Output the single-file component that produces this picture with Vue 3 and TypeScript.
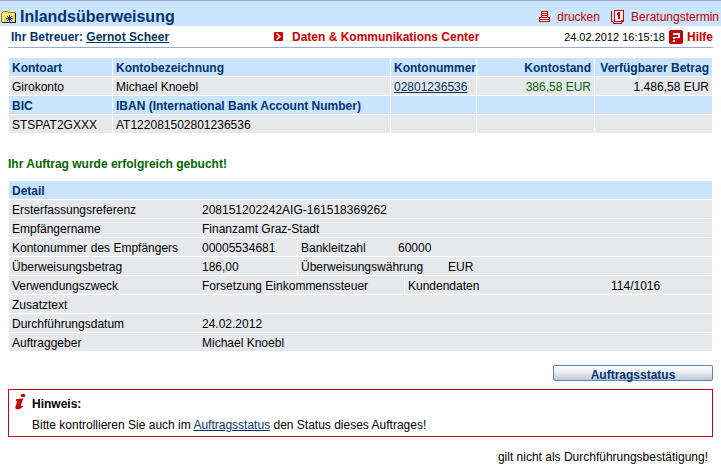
<script setup lang="ts">
interface Segment {
  label: string
  value: string
  size: 'narrow' | 'medium' | 'wide'
}

interface DetailRow {
  label: string
  value: string
  first?: 'short' | 'long'
  extra?: Segment
}

const details: DetailRow[] = [
  { label: 'Ersterfassungsreferenz', value: '208151202242AIG-161518369262' },
  { label: 'Empfängername', value: 'Finanzamt Graz-Stadt' },
  {
    label: 'Kontonummer des Empfängers',
    value: '00005534681',
    first: 'short',
    extra: { label: 'Bankleitzahl', value: '60000', size: 'narrow' },
  },
  {
    label: 'Überweisungsbetrag',
    value: '186,00',
    first: 'short',
    extra: { label: 'Überweisungswährung', value: 'EUR', size: 'medium' },
  },
  {
    label: 'Verwendungszweck',
    value: 'Forsetzung Einkommenssteuer',
    first: 'long',
    extra: { label: 'Kundendaten', value: '114/1016', size: 'wide' },
  },
  { label: 'Zusatztext', value: '' },
  { label: 'Durchführungsdatum', value: '24.02.2012' },
  { label: 'Auftraggeber', value: 'Michael Knoebl' },
]
</script>

<template>
  <div class="page">
    <header class="titlebar">
      <svg class="folder" viewBox="0 0 16 14" width="16" height="14" aria-hidden="true" shape-rendering="crispEdges">
        <path d="M1 3h1V1h5v2h7v10H1z" fill="#ffd858" />
        <path d="M2 4h12v1H3v8H2z" fill="#fff6b0" />
        <path d="M0 3h1v9H0zM1 2h1v1H1zM2 1h5v1H2zM7 2h7v1H7z" fill="#a08020" />
        <path d="M14 3h1v10h-1zM1 12h14v1H1z" fill="#201800" />
        <path d="M8 5h1v7H8zM5 8h7v1H5z" fill="#1030c0" />
        <path d="M6 6h1v1H6zM7 7h1v1H7zM9 7h1v1H9zM10 6h1v1h-1zM7 9h1v1H7zM6 10h1v1H6zM9 9h1v1H9zM10 10h1v1h-1z" fill="#1030c0" />
      </svg>
      <h1>Inlandsüberweisung</h1>
      <nav class="tools">
        <a href="#" class="tool">
          <svg viewBox="0 0 11 11" width="11" height="11" aria-hidden="true" shape-rendering="crispEdges">
            <path d="M2 0h7v6h2v5H0V6h2z" fill="#cc0000" />
            <path d="M3 1h5v1H3zM3 3h5v1H3zM3 5h5v1H3zM1 7h9v1H1zM1 9h9v1H1z" fill="#eef4fc" />
          </svg>
          drucken
        </a>
        <a href="#" class="tool">
          <svg viewBox="0 0 13 14" width="13" height="14" aria-hidden="true" shape-rendering="crispEdges">
            <path d="M3 0h10v12h-2v2H2v-2H0V1h1v10h1v1h1v1h7v-1H3z" fill="#cc0000" />
            <path d="M4 1h8v9h-2v1H4z" fill="#fff" />
            <path d="M7 2h2v7H7zM6 3h1v2H6z" fill="#cc0000" />
          </svg>
          Beratungstermin
        </a>
      </nav>
    </header>

    <div class="subbar">
      <div class="advisor">Ihr Betreuer: <a href="#">Gernot Scheer</a></div>
      <a href="#" class="center-link">
        <svg viewBox="0 0 9 9" width="9" height="9" aria-hidden="true">
          <rect width="9" height="9" rx="1" fill="#cc0000" />
          <path d="M2.500 1.500 6 4.500 2.500 7.500" fill="none" stroke="#fff" stroke-width="1.500" />
        </svg>
        Daten &amp; Kommunikations Center
      </a>
      <div class="status">
        <time datetime="2012-02-24T16:15:18">24.02.2012 16:15:18</time>
        <a href="#" class="help">
          <svg viewBox="0 0 14 14" width="14" height="14" aria-hidden="true" shape-rendering="crispEdges">
            <path d="M1 0h12v1h1v12h-1v1H1v-1H0V1h1z" fill="#cc0000" />
            <path d="M4 3h7v5H6v1H4V7h5V5H4zM4 10h2v2H4z" fill="#fff" />
          </svg>
          Hilfe
        </a>
      </div>
    </div>

    <main>
      <table class="grid accounts">
        <colgroup>
          <col class="c-type" /><col /><col class="c-number" /><col class="c-amount" /><col class="c-amount" />
        </colgroup>
        <tbody>
          <tr>
            <th>Kontoart</th><th>Kontobezeichnung</th><th>Kontonummer</th>
            <th class="right">Kontostand</th><th class="right">Verfügbarer Betrag</th>
          </tr>
          <tr>
            <td>Girokonto</td><td>Michael Knoebl</td><td><a href="#">02801236536</a></td>
            <td class="right positive">386,58 EUR</td><td class="right">1.486,58 EUR</td>
          </tr>
          <tr>
            <th>BIC</th><th>IBAN (International Bank Account Number)</th><th></th><th></th><th></th>
          </tr>
          <tr>
            <td>STSPAT2GXXX</td><td>AT122081502801236536</td><td></td><td></td><td></td>
          </tr>
        </tbody>
      </table>

      <p class="success">Ihr Auftrag wurde erfolgreich gebucht!</p>

      <table class="grid">
        <thead>
          <tr><th>Detail</th></tr>
        </thead>
        <tbody>
          <tr v-for="row in details" :key="row.label">
            <td class="detail">
              <div class="line">
                <span class="label">{{ row.label }}</span>
                <span :class="row.first">{{ row.value }}</span>
                <span v-if="row.extra" class="extra">
                  <span :class="row.extra.size">{{ row.extra.label }}</span>
                  <span>{{ row.extra.value }}</span>
                </span>
              </div>
            </td>
          </tr>
        </tbody>
      </table>

      <div class="actions">
        <button type="button">Auftragsstatus</button>
      </div>

      <section class="notice">
        <svg viewBox="0 0 12 17" width="12" height="17" aria-hidden="true">
          <ellipse cx="9" cy="2.500" rx="2.300" ry="1.800" fill="#cc0000" />
          <path d="M2 6.200 9.200 5.200 6.800 13Q6.800 14 8.600 12.700L9.200 13.500Q6.500 16.500 3.200 16.200 .8 16 1.500 13.500L3.200 8.300 1.800 7.600Z" fill="#cc0000" />
        </svg>
        <div>
          <strong>Hinweis:</strong>
          <p>Bitte kontrollieren Sie auch im <a href="#">Auftragsstatus</a> den Status dieses Auftrages!</p>
        </div>
      </section>

      <p class="footnote">gilt nicht als Durchführungsbestätigung!</p>
    </main>
  </div>
</template>

<style>
body {
  background: #fff;
}
</style>

<style scoped>
.page {
  font-family: "Liberation Sans", Arial, sans-serif;
  font-size: 12px;
  line-height: 16px;
  color: #000;
}

a {
  color: #003366;
}

.titlebar {
  display: flex;
  align-items: center;
  height: 26px;
  padding-top: 6px;
  box-sizing: border-box;
  border-top: 1px solid #99aacc;
  background: #c9e4fc;
}

.folder {
  margin: 0 3px 0 1px;
}

h1 {
  margin: 0;
  font-size: 16px;
  line-height: 20px;
  color: #003370;
}

.tools {
  display: flex;
  gap: 11px;
  margin-left: auto;
  padding-right: 2px;
}

.tool {
  display: flex;
  align-items: center;
  gap: 7px;
  color: #cc0000;
  text-decoration: none;
}

.subbar {
  display: flex;
  align-items: center;
  height: 21px;
  margin: 0 8px;
  border-bottom: 1px solid #99aacc;
}

.advisor {
  flex: 0 0 263px;
  padding-left: 3px;
  font-weight: bold;
  color: #003370;
}

.center-link,
.help {
  display: flex;
  align-items: center;
  font-weight: bold;
  color: #cc0000;
  text-decoration: none;
}

.center-link {
  gap: 9px;
}

.status {
  display: flex;
  align-items: center;
  gap: 4px;
  margin-left: auto;
}

.status time {
  font-size: 11px;
}

.help {
  gap: 4px;
}

main {
  margin: 9px 8px 0;
}

.grid {
  width: 100%;
  border-spacing: 1px;
  table-layout: fixed;
}

.grid th,
.grid td {
  height: 18px;
  padding: 2px 3px 0;
  box-sizing: border-box;
  line-height: 16px;
  text-align: left;
  white-space: nowrap;
}

.grid th {
  background: #c9e4fc;
  color: #003370;
}

.grid td {
  background: #e7e8ec;
}

.grid .right {
  text-align: right;
}

.grid .positive {
  color: #006600;
}

.c-type {
  width: 103px;
}

.c-number {
  width: 85px;
}

.c-amount {
  width: 117px;
}

.success {
  margin: 22px 0 8px;
  font-weight: bold;
  color: #006600;
}

.grid .detail {
  padding: 0 3px;
}

.line {
  display: flex;
}

.line > span {
  padding-top: 2px;
}

.label {
  flex: 0 0 190px;
}

.short {
  flex: 0 0 95px;
}

.long {
  flex: 0 0 202px;
}

.extra {
  display: flex;
  padding-left: 3px;
  border-left: 1px solid #fff;
}

.narrow {
  width: 97px;
}

.medium {
  width: 147px;
}

.wide {
  width: 203px;
}

.actions {
  display: flex;
  justify-content: flex-end;
  margin-top: 13px;
}

button {
  width: 160px;
  height: 16px;
  padding: 2px 0 0;
  border: 1px solid #5b86ad;
  border-radius: 2px;
  background: linear-gradient(#ffffff, #e6e9f0 50%, #bcc8da);
  font: bold 12px/14px "Liberation Sans", Arial, sans-serif;
  color: #003370;
}

.notice {
  display: flex;
  gap: 6px;
  margin-top: 8px;
  padding: 3px 5px;
  border: 1px solid #cc0000;
}

.notice strong {
  display: block;
  padding-top: 3px;
}

.notice p {
  margin: 5px 0 0;
}

.footnote {
  margin: 12px 5px 0;
  text-align: right;
}
</style>
